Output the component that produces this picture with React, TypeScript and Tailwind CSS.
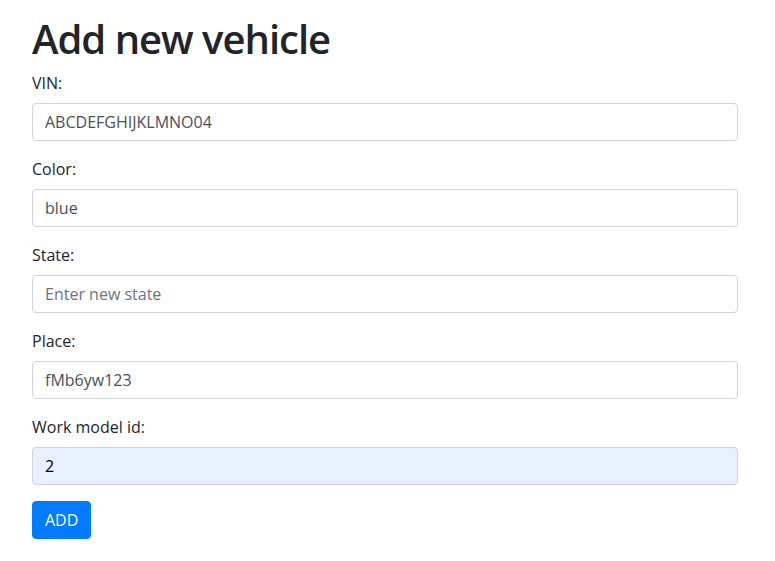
import React, { useState } from 'react';

const font = { fontFamily: '"Open Sans", "Noto Sans", sans-serif' };

interface FieldProps {
  label: string;
  value?: string;
  placeholder?: string;
  autofilled?: boolean;
}

const Field: React.FC<FieldProps> = ({ label, value = '', placeholder, autofilled }) => {
  const [val, setVal] = useState(value);
  return (
    <div className="mb-4">
      <label className="mb-2 block text-[16px] leading-6 text-[#212529]">{label}</label>
      <input
        type="text"
        value={val}
        placeholder={placeholder}
        onChange={(e) => setVal(e.target.value)}
        className={`block h-[38px] w-full rounded border border-[#ced4da] px-3 py-1.5 text-[16px] leading-6 text-[#495057] outline-none placeholder:text-[#6c757d] ${
          autofilled ? 'bg-[#e8f0fe] text-black' : 'bg-white'
        }`}
      />
    </div>
  );
};

export default function App() {
  return (
    <div className="min-h-screen bg-white pl-8 pr-[37px] pt-[15px]" style={font}>
      <h1 className="mb-2 text-[40px] font-semibold leading-[48px] tracking-[-1px] text-[#212529]">Add new vehicle</h1>
      <form onSubmit={(e) => e.preventDefault()}>
        <Field label="VIN:" value="ABCDEFGHIJKLMNO04" />
        <Field label="Color:" value="blue" />
        <Field label="State:" placeholder="Enter new state" />
        <Field label="Place:" value="fMb6yw123" />
        <Field label="Work model id:" value="2" autofilled />
        <button
          type="submit"
          className="rounded border border-[#007bff] bg-[#007bff] px-3 py-1.5 text-[16px] leading-6 text-white"
        >
          ADD
        </button>
      </form>
    </div>
  );
}
